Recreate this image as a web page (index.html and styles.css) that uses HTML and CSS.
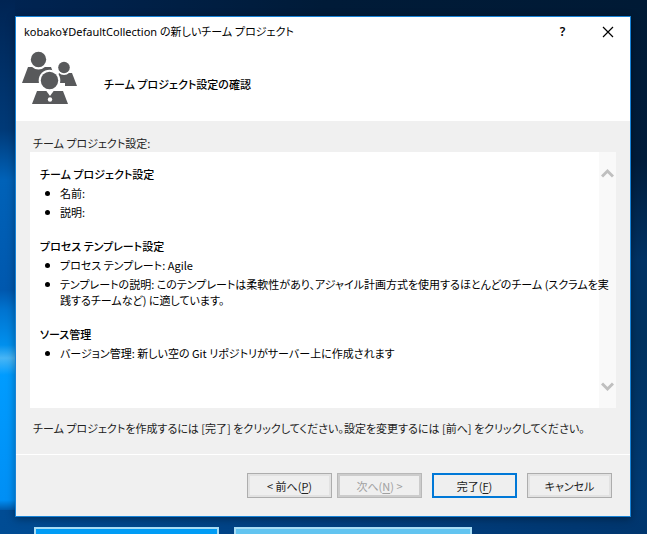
FILE: index.html
```html
<!DOCTYPE html>
<html lang="ja">
<head>
<meta charset="utf-8">
<title>kobako¥DefaultCollection の新しいチーム プロジェクト</title>
<link rel="stylesheet" href="styles.css">
</head>
<body>
<main class="dialog">
  <header class="header">
    <div class="titlebar">
      <h1 class="title">kobako¥DefaultCollection の新しいチーム プロジェクト</h1>
      <button class="caption-button" type="button" aria-label="ヘルプ">?</button>
      <button class="caption-button" type="button" aria-label="閉じる">
        <svg width="12" height="12" viewBox="0 0 12 12"><path d="M1 1l10 10M11 1L1 11" fill="none" stroke="#000" stroke-width="1.2"/></svg>
      </button>
    </div>
    <div class="banner">
      <svg class="team" width="56" height="54" viewBox="0 0 56 54" fill="#58595b">
        <path d="M6 16h23l6 16H0z"/>
        <path d="M37 22h13l5 13H33z"/>
        <circle cx="16.500" cy="9" r="9.500" fill="#fff"/>
        <circle cx="16.500" cy="8.500" r="7.700"/>
        <circle cx="42" cy="16.500" r="7.500" fill="#fff"/>
        <circle cx="42" cy="16.500" r="5.800"/>
        <path d="M13 32h30v5H13z" fill="#fff"/>
        <path d="M15 40h26l5 13H10z"/>
        <circle cx="27.500" cy="29.500" r="10.800" fill="#fff"/>
        <circle cx="27.500" cy="29.500" r="8.700"/>
        <path d="M24 39.500h8L28 45z" fill="#fff"/>
        <circle cx="28" cy="48.500" r="2.200" fill="#fff"/>
      </svg>
      <h2 class="heading">チーム プロジェクト設定の確認</h2>
    </div>
  </header>
  <section class="content">
    <p class="note" id="summary-label">チーム プロジェクト設定:</p>
    <div class="panel" role="region" aria-labelledby="summary-label">
      <div class="summary">
        <h3>チーム プロジェクト設定</h3>
        <ul>
          <li>名前:</li>
          <li>説明:</li>
        </ul>
        <h3>プロセス テンプレート設定</h3>
        <ul>
          <li>プロセス テンプレート: Agile</li>
          <li>テンプレートの説明: このテンプレートは柔軟性があり、アジャイル計画方式を使用するほとんどのチーム (スクラムを実<br>践するチームなど) に適しています。</li>
        </ul>
        <h3>ソース管理</h3>
        <ul>
          <li>バージョン管理: 新しい空の Git リポジトリがサーバー上に作成されます</li>
        </ul>
      </div>
      <div class="scrollbar">
        <svg width="13" height="10" viewBox="0 0 13 10"><path d="M1 8.500l5.500-5.500L12 8.500" fill="none" stroke="#bfbfbf" stroke-width="3"/></svg>
        <svg width="13" height="10" viewBox="0 0 13 10"><path d="M1 1.500L6.500 7 12 1.500" fill="none" stroke="#bfbfbf" stroke-width="3"/></svg>
      </div>
    </div>
    <p class="note">チーム プロジェクトを作成するには [完了] をクリックしてください。設定を変更するには [前へ] をクリックしてください。</p>
  </section>
  <footer class="actions">
    <div class="pair">
      <button class="button" type="button">&lt; 前へ(<u>P</u>)</button>
      <button class="button" type="button" disabled>次へ(<u>N</u>) &gt;</button>
    </div>
    <button class="button primary" type="button">完了(<u>F</u>)</button>
    <button class="button" type="button">キャンセル</button>
  </footer>
</main>
<div class="tiles"><div class="tile"></div><div class="tile pale"></div></div>
</body>
</html>
```
FILE: styles.css
```css
* { box-sizing: border-box; }

body {
  margin: 0;
  min-height: 100vh;
  padding: 16px 16px 0 15px;
  overflow: hidden;
  font: 11px/16px "Noto Sans CJK JP", sans-serif;
  font-feature-settings: "palt";
  color: #000;
  background:
    linear-gradient(90deg, #004c94, #003f80 50%, #00366e) 0 100% / 100% 24px no-repeat,
    linear-gradient(180deg, #002453 0, #003a78 130px, #0062b8 180px, #0058ae 290px, #0074d0 310px, #0090ee 345px, #48b5f5 358px, #009cff 375px, #008ff5 500px, #004f9c 512px) 0 0 / 15px 100% no-repeat,
    linear-gradient(180deg, #001a35 0, #001c3a 160px, #003264 260px, #00325f 340px, #003c78 534px) 100% 0 / 16px 100% no-repeat,
    linear-gradient(90deg, #002453, #001b38 50%, #001a35);
}

h1, h2, h3, p, ul { margin: 0; padding: 0; font-size: 11px; }

.dialog {
  border: 1px solid #1883d7;
  background: #f0f0f0;
  box-shadow: 0 2px 8px rgba(0, 0, 0, .35);
}

.header { background: #fff; padding-bottom: 16px; }

.titlebar { display: flex; height: 30px; align-items: center; padding-left: 8px; }

.title { flex: 1; font-family: "Noto Sans", "Noto Sans CJK JP", sans-serif; font-weight: 400; white-space: nowrap; }

.caption-button {
  display: flex;
  align-items: center;
  justify-content: center;
  width: 45px;
  height: 30px;
  padding: 0;
  border: 0;
  background: none;
  font: 600 12px/16px "Noto Sans", sans-serif;
}

.banner { display: flex; align-items: center; gap: 26px; height: 58px; padding: 4px 6px 0; }

.heading { font-weight: 500; padding-top: 12px; }

.content { padding: 14px 14px 18px; }

.note { padding-left: 3px; white-space: nowrap; color: #222; }

.panel { display: flex; height: 256px; margin: 1px 0 12px; background: #fff; }

.summary { flex: 1; min-width: 0; padding: 14px 0 0 10px; white-space: nowrap; }

.summary h3 { font-weight: 500; margin-bottom: 3px; }

.summary ul { list-style: none; margin-bottom: 18px; }

.summary li { position: relative; padding-left: 20px; margin-bottom: 3px; }

.summary li::before {
  content: "";
  position: absolute;
  left: 5px;
  top: 6px;
  width: 5px;
  height: 5px;
  border-radius: 50%;
  background: #000;
}

.scrollbar {
  display: flex;
  flex-direction: column;
  justify-content: space-between;
  align-items: center;
  width: 17px;
  padding: 16px 0;
  background: #f9f9f9;
}

.actions {
  display: flex;
  justify-content: flex-end;
  gap: 10px;
  padding: 18px 18px 18px;
  border-top: 1px solid #fff;
}

.pair { display: flex; gap: 5px; }

.button {
  width: 85px;
  height: 25px;
  padding: 0;
  border: 1px solid #adadad;
  background: #efefef;
  box-shadow: inset 0 0 0 2px #e2e2e2;
  font: inherit;
  font-feature-settings: inherit;
  color: #222;
}

.button u { text-underline-offset: 2px; }

.button:disabled { color: #a0a0a0; box-shadow: inset 0 0 0 2px #ccc; border-color: #b8b8b8; }

.button.primary { border: 2px solid #0078d7; box-shadow: none; }

.tiles { display: flex; gap: 15px; padding: 10px 0 0 19px; }

.tile { width: 185px; height: 7px; border: 2px solid #a8dcf4; border-bottom: 0; background: #009cf5; }

.tile.pale { width: 238px; background: #62c4f0; }
```
